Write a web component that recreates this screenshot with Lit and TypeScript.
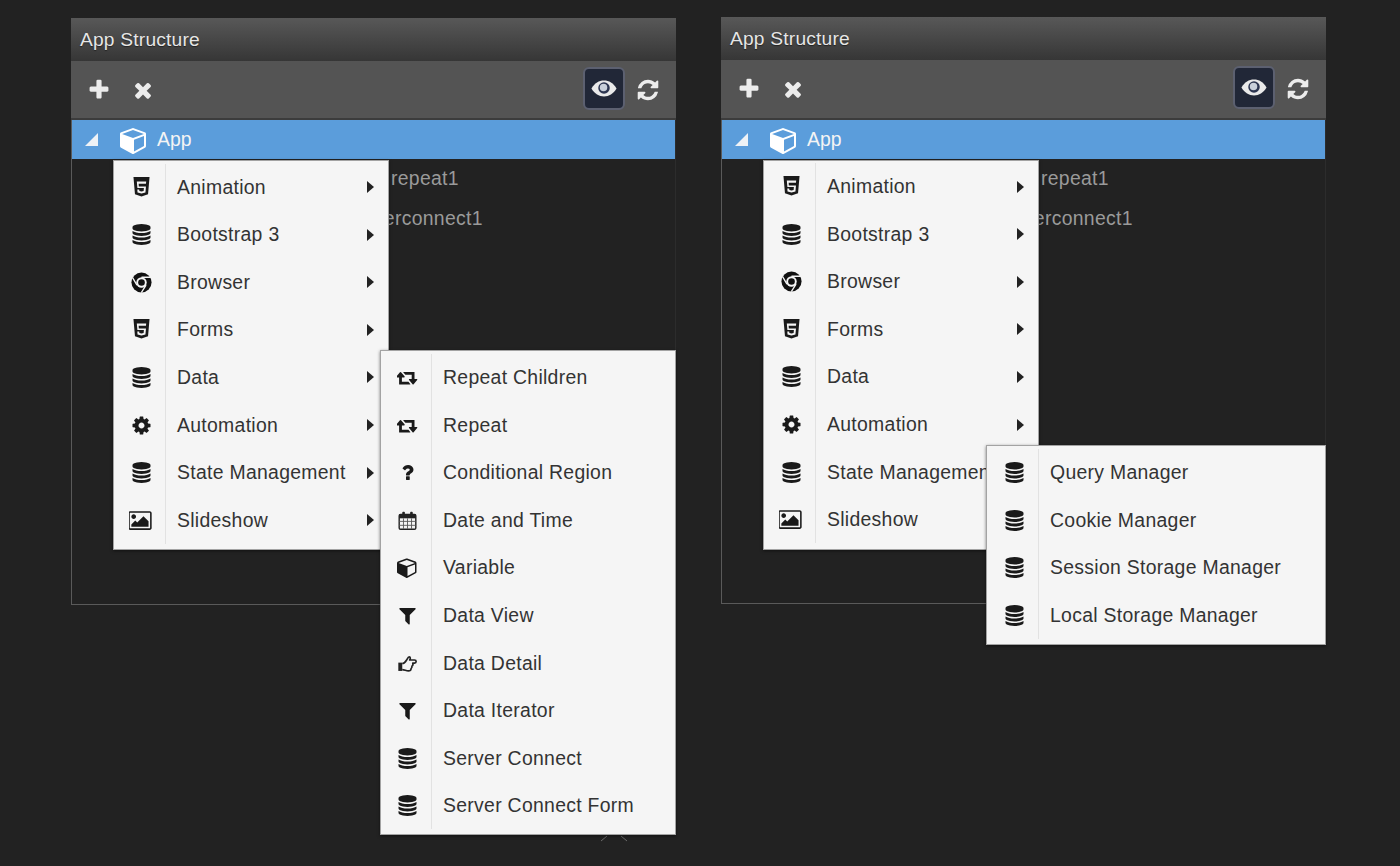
import { LitElement, html, css, svg } from "lit";
import { customElement, property } from "lit/decorators.js";

type Ic = { vb: string; d: string };
const db = "M896 768q237 0 443-43t325-127v170q0 69-103 128t-280 93.5-385 34.5-385-34.5-280-93.5-103-128v-170q119 84 325 127t443 43zm0 768q237 0 443-43t325-127v170q0 69-103 128t-280 93.5-385 34.5-385-34.5-280-93.5-103-128v-170q119 84 325 127t443 43zm0-384q237 0 443-43t325-127v170q0 69-103 128t-280 93.5-385 34.5-385-34.5-280-93.5-103-128v-170q119 84 325 127t443 43zm0-1152q208 0 385 34.5t280 93.5 103 128v128q0 69-103 128t-280 93.5-385 34.5-385-34.5-280-93.5-103-128v-128q0-69 103-128t280-93.5 385-34.5z";
const ICONS: Record<string, Ic> = {
  plus: { vb: "0 0 1792 1792", d: "M1600 736v192q0 40-28 68t-68 28h-416v416q0 40-28 68t-68 28h-192q-40 0-68-28t-28-68v-416h-416q-40 0-68-28t-28-68v-192q0-40 28-68t68-28h416v-416q0-40 28-68t68-28h192q40 0 68 28t28 68v416h416q40 0 68 28t28 68z" },
  times: { vb: "0 0 1792 1792", d: "M1490 1322q0 40-28 68l-136 136q-28 28-68 28t-68-28l-294-294-294 294q-28 28-68 28t-68-28l-136-136q-28-28-28-68t28-68l294-294-294-294q-28-28-28-68t28-68l136-136q28-28 68-28t68 28l294 294 294-294q28-28 68-28t68 28l136 136q28 28 28 68t-28 68l-294 294 294 294q28 28 28 68z" },
  refresh: { vb: "0 0 1792 1792", d: "M1639 1056q0 5-1 7-64 268-268 434.5t-478 166.5q-146 0-282.5-55t-243.5-157l-129 129q-19 19-45 19t-45-19-19-45v-448q0-26 19-45t45-19h448q26 0 45 19t19 45-19 45l-137 137q71 66 161 102t187 36q134 0 250-65t186-179q11-17 53-117 8-23 30-23h192q13 0 22.5 9.5t9.5 22.5zm25-800v448q0 26-19 45t-45 19h-448q-26 0-45-19t-19-45 19-45l138-138q-148-137-349-137-134 0-250 65t-186 179q-11 17-53 117-8 23-30 23h-199q-13 0-22.5-9.5t-9.5-22.5v-7q65-268 270-434.5t480-166.5q146 0 284 55.5t245 156.5l130-129q19-19 45-19t45 19 19 45z" },
  cube: { vb: "0 0 1792 1792", d: "M896 1629l640-349v-636l-640 233v752zm-64-865l698-254-698-254-698 254zm832-252v768q0 35-18 65t-49 47l-704 384q-28 16-61 16t-61-16l-704-384q-31-17-49-47t-18-65v-768q0-40 23-73t61-47l704-256q22-8 44-8t44 8l704 256q38 14 61 47t23 73z" },
  html5: { vb: "0 0 1792 1792", d: "M1278 575l18-195h-800l50 568h554l-22 244-182 50-182-50-12-132h-165l21 263 334 92h6l334-92 46-510h-610l-16-238h626zm-1068-575h1372l-128 1472-558 192-558-192z" },
  db: { vb: "0 0 1792 1792", d: db },
  cog: { vb: "0 0 1792 1792", d: "M1152 896q0-106-75-181t-181-75-181 75-75 181 75 181 181 75 181-75 75-181zm512-109v222q0 12-8 23t-20 13l-185 28q-19 54-39 91 35 50 107 138 10 12 10 25t-9 23q-27 37-99 108t-94 71q-12 0-26-9l-138-108q-44 23-91 38-16 136-29 186-7 28-36 28h-222q-14 0-24.5-8.5t-11.5-21.5l-28-184q-49-16-90-37l-141 107q-10 9-25 9-14 0-25-11-126-114-165-168-7-10-7-23 0-12 8-23 15-21 51-66.5t54-70.5q-27-50-41-99l-183-27q-13-2-21-12.5t-8-23.5v-222q0-12 8-23t19-13l186-28q14-46 39-92-40-57-107-138-10-12-10-24 0-10 9-23 26-36 98.5-107.5t94.5-71.5q13 0 26 10l138 107q44-23 91-38 16-136 29-186 7-28 36-28h222q14 0 24.5 8.5t11.5 21.5l28 184q49 16 90 37l142-107q9-9 24-9 13 0 25 10 129 119 165 170 7 8 7 22 0 12-8 23-15 21-51 66.5t-54 70.5q26 50 41 98l183 28q13 2 21 12.5t8 23.5z" },
  picture: { vb: "0 0 2048 1792", d: "M576 576q0 80-56 136t-136 56-136-56-56-136 56-136 136-56 136 56 56 136zm1024 384v448h-1408v-192l320-320 160 160 512-512zm96-704h-1600q-13 0-22.5 9.5t-9.5 22.5v1216q0 13 9.5 22.5t22.5 9.5h1600q13 0 22.5-9.5t9.5-22.5v-1216q0-13-9.5-22.5t-22.5-9.5zm160 32v1216q0 66-47 113t-113 47h-1600q-66 0-113-47t-47-113v-1216q0-66 47-113t113-47h1600q66 0 113 47t47 113z" },
  retweet: { vb: "0 0 1920 1792", d: "M1216 1504q0 13-9.5 22.5t-22.5 9.5h-960q-8 0-13.5-2t-9-7-5.5-8-3-11.5-1-11.5v-600h-192q-26 0-45-19t-19-45q0-24 15-41l320-384q19-22 49-22t49 22l320 384q15 17 15 41 0 26-19 45t-45 19h-192v384h576q16 0 25 11l160 192q7 10 7 21zm640-416q0 24-15 41l-320 384q-20 23-49 23t-49-23l-320-384q-15-17-15-41 0-26 19-45t45-19h192v-384h-576q-16 0-25-12l-160-192q-7-9-7-20 0-13 9.5-22.5t22.5-9.5h960q8 0 13.5 2t9 7 5.5 8 3 11.5 1 11.5v600h192q26 0 45 19t19 45z" },
  question: { vb: "0 0 1792 1792", d: "M1088 1256v240q0 16-12 28t-28 12h-240q-16 0-28-12t-12-28v-240q0-16 12-28t28-12h240q16 0 28 12t12 28zm316-600q0 54-15.5 101t-35 76.5-55 59.5-57.5 43.5-61 35.5q-41 23-68.5 65t-27.5 67q0 17-12 32.5t-28 15.5h-240q-15 0-25.5-18.5t-10.5-37.5v-45q0-83 65-156.5t143-108.5q59-27 84-56t25-76q0-42-46.5-74t-107.5-32q-65 0-108 29-35 25-107 115-13 16-31 16-12 0-25-8l-164-125q-13-10-15.5-25t5.5-28q160-266 464-266 80 0 161 31t146 83 106 127.5 41 158.5z" },
  filter: { vb: "0 0 1792 1792", d: "M1595 295q17 41-14 70l-493 493v742q0 42-39 59-13 5-25 5-27 0-45-19l-256-256q-19-19-19-45v-486l-493-493q-31-29-14-70 17-39 59-39h1280q42 0 59 39z" },
};

function icon(name: string, cls = "ic") {
  if (name === "eye") {
    return html`<svg class=${cls} viewBox="0 0 28 20" aria-hidden="true">
      <path d="M.5 10C4 4.200 8.500 1.500 14 1.500S24 4.200 27.500 10C24 15.800 19.500 18.500 14 18.500S4 15.800.5 10z" fill="#eaeaea"></path>
      <circle cx="14" cy="9.500" r="6.200" fill="#2c3550"></circle>
      <circle cx="13.500" cy="9" r="4" fill="#c9d0da"></circle>
    </svg>`;
  }
  if (name === "chrome") {
    return html`<svg class=${cls} viewBox="0 0 24 24" aria-hidden="true">
      <circle cx="12" cy="12" r="11.500" fill="#111"></circle>
      <circle cx="12" cy="12" r="6" fill="#f5f5f5"></circle>
      <circle cx="12" cy="12" r="3.800" fill="#111"></circle>
      <path d="M12 6L22.500 6M6.800 15L1.800 6.500M17.200 15L11.800 23.500" stroke="#f5f5f5" stroke-width="1.500" fill="none"></path>
    </svg>`;
  }
  if (name === "calendar") {
    return html`<svg class=${cls} viewBox="0 0 24 24" aria-hidden="true">
      <rect x="2.500" y="5" width="19" height="17" rx="1.500" fill="#f5f5f5" stroke="#222" stroke-width="1.600"></rect>
      <rect x="2.500" y="5" width="19" height="4.500" fill="#222"></rect>
      <rect x="6" y="2" width="3" height="5" rx="1" fill="#222"></rect>
      <rect x="15" y="2" width="3" height="5" rx="1" fill="#222"></rect>
      <path d="M2.500 13h19M2.500 17.500h19M7.400 9.500v12M12 9.500v12M16.600 9.500v12" stroke="#555" stroke-width="1" fill="none"></path>
    </svg>`;
  }
  if (name === "hand") {
    return html`<svg class=${cls} viewBox="0 0 24 24" aria-hidden="true">
      <rect x="1.500" y="11" width="4.500" height="9.500" fill="#222"></rect>
      <path d="M6 12c2 0 3.500-1.500 5-4c1-1.700 1.500-3.500 3-3.500c1.500 0 1.500 2 .5 3.500h5.500c2.500 0 2.500 3.500 0 3.500h-2c.5 1.500 0 3-1 3.500c.5 1.500-.5 2.500-1 3c.2 1.500-1 2.500-3 2.500c-2.500 0-4.500-1.500-7-1.500" fill="none" stroke="#222" stroke-width="1.900" stroke-linejoin="round"></path>
    </svg>`;
  }
  const i = ICONS[name];
  const extra = name === "picture" ? " wide" : "";
  return html`<svg class=${cls + extra} viewBox=${i.vb} aria-hidden="true">${svg`<path d=${i.d}></path>`}</svg>`;
}

type Item = { ic: string; label: string; arrow?: boolean };

@customElement("fly-menu")
class FlyMenu extends LitElement {
  @property({ attribute: false }) items: Item[] = [];
  static styles = css`
    :host {
      display: block;
      background: #f5f5f5;
      border: 1px solid #a3a3a3;
      box-shadow: 0 1px 3px rgba(0, 0, 0, 0.5);
      padding: 3px 0 4px;
      box-sizing: border-box;
      font: 19.4px "Liberation Sans", Arial, sans-serif;
      letter-spacing: 0.3px;
      color: #333;
    }
    .list {
      display: flex;
      flex-direction: column;
      position: relative;
    }
    .sep {
      position: absolute;
      top: 0;
      bottom: 0;
      left: var(--icon-col);
      width: 1px;
      background: #e2e2e2;
    }
    .row {
      display: flex;
      align-items: center;
      height: 47.55px;
      white-space: nowrap;
      overflow: hidden;
    }
    .cell {
      flex: 0 0 var(--icon-col);
      box-sizing: border-box;
      padding-left: 3px;
      display: flex;
      justify-content: center;
    }
    .ic {
      width: 21px;
      height: 21px;
      fill: #1a1a1a;
      display: block;
    }
    .ic.wide {
      width: 25px;
      height: 25px;
    }
    .label {
      flex: 1;
      padding-left: 12px;
    }
    .arrow {
      flex: none;
      width: 0;
      height: 0;
      border-left: 7px solid #222;
      border-top: 6px solid transparent;
      border-bottom: 6px solid transparent;
      margin-right: 14px;
    }
  `;
  render() {
    return html`<div class="list">
      <div class="sep"></div>
      ${this.items.map(
        (it) => html`<div class="row">
          <span class="cell">${icon(it.ic)}</span>
          <span class="label">${it.label}</span>
          ${it.arrow ? html`<span class="arrow"></span>` : null}
        </div>`
      )}
    </div>`;
  }
}

const MAIN: Item[] = [
  { ic: "html5", label: "Animation", arrow: true },
  { ic: "db", label: "Bootstrap 3", arrow: true },
  { ic: "chrome", label: "Browser", arrow: true },
  { ic: "html5", label: "Forms", arrow: true },
  { ic: "db", label: "Data", arrow: true },
  { ic: "cog", label: "Automation", arrow: true },
  { ic: "db", label: "State Management", arrow: true },
  { ic: "picture", label: "Slideshow", arrow: true },
];
const DATA: Item[] = [
  { ic: "retweet", label: "Repeat Children" },
  { ic: "retweet", label: "Repeat" },
  { ic: "question", label: "Conditional Region" },
  { ic: "calendar", label: "Date and Time" },
  { ic: "cube", label: "Variable" },
  { ic: "filter", label: "Data View" },
  { ic: "hand", label: "Data Detail" },
  { ic: "filter", label: "Data Iterator" },
  { ic: "db", label: "Server Connect" },
  { ic: "db", label: "Server Connect Form" },
];
const STATE: Item[] = [
  { ic: "db", label: "Query Manager" },
  { ic: "db", label: "Cookie Manager" },
  { ic: "db", label: "Session Storage Manager" },
  { ic: "db", label: "Local Storage Manager" },
];

@customElement("app-root")
export class AppRoot extends LitElement {
  static styles = css`
    :host {
      display: block;
      height: 866px;
      overflow: hidden;
      position: relative;
      background: #222222;
      font-family: "Liberation Sans", Arial, sans-serif;
    }
    .page {
      display: flex;
      gap: 45px;
      padding: 17px 0 0 71px;
    }
    .panel {
      position: relative;
      width: 605px;
      height: 587px;
      box-sizing: border-box;
      border-left: 1px solid #5a5a5a;
      border-bottom: 1px solid #5a5a5a;
      border-right: 1px solid #2c2c2c;
    }
    .panel.first {
      margin-top: 1px;
    }
    .title {
      height: 43px;
      margin-left: -1px;
      margin-right: -1px;
      padding-left: 9px;
      display: flex;
      align-items: center;
      background: linear-gradient(#585858, #363636);
      color: #e6e6e6;
      font-size: 19.2px;
      letter-spacing: 0.2px;
      text-shadow: 0 1px 1px #222;
    }
    .toolbar {
      height: 57px;
      margin-left: -1px;
      margin-right: -1px;
      display: flex;
      align-items: center;
      padding: 0 16px 0 16px;
      background: #545454;
      border-bottom: 2px solid #3c3c3c;
      gap: 20px;
    }
    .panel.second .toolbar {
      height: 58px;
    }
    .tool {
      width: 24px;
      height: 24px;
      fill: #ececec;
      display: block;
    }
    .spacer {
      flex: 1;
    }
    .eye {
      width: 42px;
      height: 43px;
      box-sizing: border-box;
      border-radius: 6px;
      background: #212737;
      border: 2px solid #5c6070;
      display: flex;
      align-items: center;
      justify-content: center;
      margin: 0 -9px 3px 0;
    }
    .eye svg {
      width: 26px;
      height: 19px;
      display: block;
    }
    .app {
      height: 39px;
      background: #5b9ddb;
      display: flex;
      align-items: center;
      color: #f4f4f4;
      font-size: 19.4px;
      padding-left: 13px;
    }
    .tri {
      width: 0;
      height: 0;
      border-bottom: 13px solid #eef2f6;
      border-left: 13px solid transparent;
      margin-right: 22px;
    }
    .cube {
      width: 28px;
      height: 28px;
      fill: #fff;
      display: block;
      margin-right: 9px;
    }
    .tree {
      color: #9a9a9a;
      font-size: 19.4px;
      letter-spacing: 0.3px;
    }
    .node {
      height: 39.5px;
      display: flex;
      align-items: center;
    }
    .node.a {
      padding-left: 319px;
    }
    .node.b {
      padding-left: 274px;
    }
    .menu {
      position: absolute;
      z-index: 2;
    }
    .main {
      left: 41px;
      top: 142px;
      width: 276px;
      height: 390px;
      padding-top: 2.5px;
      --icon-col: 51px;
    }
    .panel.second .main {
      top: 143px;
      padding-top: 2px;
    }
    .sub-data {
      left: 308px;
      top: 332px;
      width: 296px;
      height: 485px;
      z-index: 3;
      --icon-col: 50px;
    }
    .sub-state {
      left: 264px;
      top: 428px;
      width: 340px;
      height: 200px;
      z-index: 3;
      --icon-col: 51px;
    }
    .chev {
      position: absolute;
      left: 526px;
      top: 817px;
      width: 32px;
      height: 8px;
      fill: none;
      stroke: #6a6a6a;
      stroke-width: 1;
    }
  `;

  panel(first: boolean) {
    const sub = first ? DATA : STATE;
    return html`<section class="panel ${first ? "first" : "second"}">
      <div class="title">App Structure</div>
      <div class="toolbar">
        ${icon("plus", "tool")} ${icon("times", "tool")}
        <span class="spacer"></span>
        <span class="eye">${icon("eye", "eyeic")}</span>
        ${icon("refresh", "tool")}
      </div>
      <div class="app">
        <span class="tri"></span>
        ${icon("cube", "cube")}
        <span>App</span>
      </div>
      <div class="tree">
        <div class="node a">repeat1</div>
        <div class="node b">serverconnect1</div>
      </div>
      <fly-menu class="menu main" .items=${MAIN}></fly-menu>
      <fly-menu class="menu ${first ? "sub-data" : "sub-state"}" .items=${sub}></fly-menu>
      ${first
        ? html`<svg class="chev" viewBox="0 0 32 8"><path d="M3 6L9 1M29 6L23 1"></path></svg>`
        : null}
    </section>`;
  }

  render() {
    return html`<div class="page">${this.panel(true)}${this.panel(false)}</div>`;
  }
}
void FlyMenu;
